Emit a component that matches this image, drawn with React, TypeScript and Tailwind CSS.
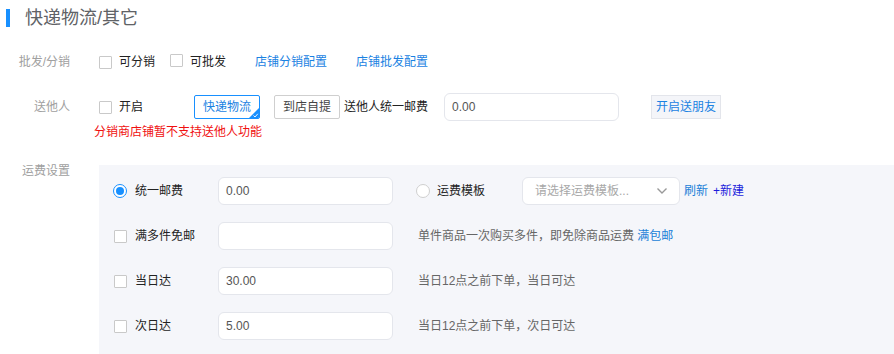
import React from 'react'

const Checkbox = () => (
  <span className="inline-block w-[13px] h-[13px] border border-[#c9c9c9] bg-white rounded-[1px] shrink-0" />
)

const Radio = ({ checked }: { checked?: boolean }) =>
  checked ? (
    <span className="w-[14px] h-[14px] rounded-full border border-[#1890ff] bg-white flex items-center justify-center shrink-0">
      <span className="w-[8px] h-[8px] rounded-full bg-[#1890ff]" />
    </span>
  ) : (
    <span className="w-[14px] h-[14px] rounded-full border border-[#cfcfcf] bg-white shrink-0" />
  )

const TextInput = ({ value, width = 'w-[175px]' }: { value?: string; width?: string }) => (
  <div className={`${width} h-[28px] border border-[#e4e6ec] rounded-[6px] bg-white flex items-center px-[7px] text-[12px] text-[#555]`}>
    {value}
  </div>
)

const FeeRow = ({
  icon,
  label,
  children,
}: {
  icon: React.ReactNode
  label: string
  children: React.ReactNode
}) => (
  <div className="flex items-center h-[28px]">
    <div className="w-[105px] flex items-center gap-[8px]">
      <span className="w-[14px] flex justify-center">{icon}</span>
      <span className="text-[12px] text-[#222]">{label}</span>
    </div>
    {children}
  </div>
)

export default function App() {
  return (
    <div
      className="w-[894px] h-[354px] bg-white overflow-hidden leading-[16px]"
      style={{ fontFamily: '"Liberation Sans", "Noto Sans CJK SC", sans-serif' }}
    >
      {/* Title */}
      <div className="flex items-center gap-[15px] pt-[9px] pl-[6px]">
        <span className="w-[4px] h-[18px] bg-[#1890ff]" />
        <span className="text-[18px] leading-[18px] text-[#606266]">快递物流/其它</span>
      </div>

      {/* 批发/分销 */}
      <div className="flex items-center h-[24px] mt-[23px]">
        <div className="w-[70px] text-right text-[12px] text-[#a0a0a0]">批发/分销</div>
        <div className="ml-[29px] flex items-center text-[12px]">
          <Checkbox />
          <span className="ml-[7px] text-[#222]">可分销</span>
          <span className="ml-[15px]"><Checkbox /></span>
          <span className="ml-[7px] text-[#222]">可批发</span>
          <span className="ml-[29px] text-[#1a82e2]">店铺分销配置</span>
          <span className="ml-[29px] text-[#1a82e2]">店铺批发配置</span>
        </div>
      </div>

      {/* 送他人 */}
      <div className="flex items-center h-[28px] mt-[19px]">
        <div className="w-[70px] text-right text-[12px] text-[#a0a0a0]">送他人</div>
        <div className="ml-[29px] flex items-center text-[12px]">
          <Checkbox />
          <span className="ml-[7px] text-[#222]">开启</span>
          <div className="relative ml-[51px] w-[66px] h-[24px] border border-[#1890ff] rounded-[2px] bg-white flex items-center justify-center text-[#1a82e2] overflow-hidden">
            快递物流
            <svg className="absolute right-0 bottom-0" width="10" height="10" viewBox="0 0 10 10">
              <polygon points="10,0 10,10 0,10" fill="#1890ff" />
              <polyline points="4.5,7.5 6,9 8.8,5.8" fill="none" stroke="#fff" strokeWidth="0.9" />
            </svg>
          </div>
          <div className="ml-[14px] w-[66px] h-[24px] border border-[#cfcfcf] rounded-[2px] bg-white flex items-center justify-center text-[#444]">
            到店自提
          </div>
          <span className="ml-[4px] text-[#222]">送他人统一邮费</span>
          <div className="ml-[16px]">
            <TextInput value="0.00" />
          </div>
          <div className="ml-[32px] w-[70px] h-[24px] border border-[#e3e5eb] bg-[#f4f5f9] flex items-center justify-center text-[#1a82e2]">
            开启送朋友
          </div>
        </div>
      </div>
      <div className="pl-[94px] mt-[3px] text-[12px] text-[#f01010]">分销商店铺暂不支持送他人功能</div>

      {/* 运费设置 */}
      <div className="flex items-start mt-[25px]">
        <div className="w-[70px] text-right text-[12px] text-[#a0a0a0] -mt-[2px]">运费设置</div>
        <div className="ml-[29px] flex-1 h-[200px] bg-[#f5f6fa] pl-[14px] pt-[12px] flex flex-col gap-[17px]">
          <FeeRow icon={<Radio checked />} label="统一邮费">
            <TextInput value="0.00" />
            <div className="ml-[23px] w-[106px] flex items-center gap-[7px]">
              <Radio />
              <span className="text-[12px] text-[#222]">运费模板</span>
            </div>
            <div className="w-[158px] h-[28px] border border-[#e4e6ec] rounded-[6px] bg-white flex items-center justify-between pl-[12px] pr-[11px] text-[12px] text-[#a8a8a8]">
              <span>请选择运费模板...</span>
              <svg width="12" height="8" viewBox="0 0 12 8">
                <polyline points="1.5,1.5 6,6 10.5,1.5" fill="none" stroke="#999" strokeWidth="1.4" />
              </svg>
            </div>
            <span className="ml-[4px] text-[12px] text-[#1a7fd8]">刷新</span>
            <span className="ml-[5px] text-[12px] text-[#1c1cdc]">+新建</span>
          </FeeRow>
          <FeeRow icon={<Checkbox />} label="满多件免邮">
            <TextInput />
            <span className="ml-[25px] text-[12px] text-[#666]">
              单件商品一次购买多件，即免除商品运费 <span className="text-[#1a7fd8]">满包邮</span>
            </span>
          </FeeRow>
          <FeeRow icon={<Checkbox />} label="当日达">
            <TextInput value="30.00" />
            <span className="ml-[25px] text-[12px] text-[#666]">当日12点之前下单，当日可达</span>
          </FeeRow>
          <FeeRow icon={<Checkbox />} label="次日达">
            <TextInput value="5.00" />
            <span className="ml-[25px] text-[12px] text-[#666]">当日12点之前下单，次日可达</span>
          </FeeRow>
        </div>
      </div>
    </div>
  )
}
